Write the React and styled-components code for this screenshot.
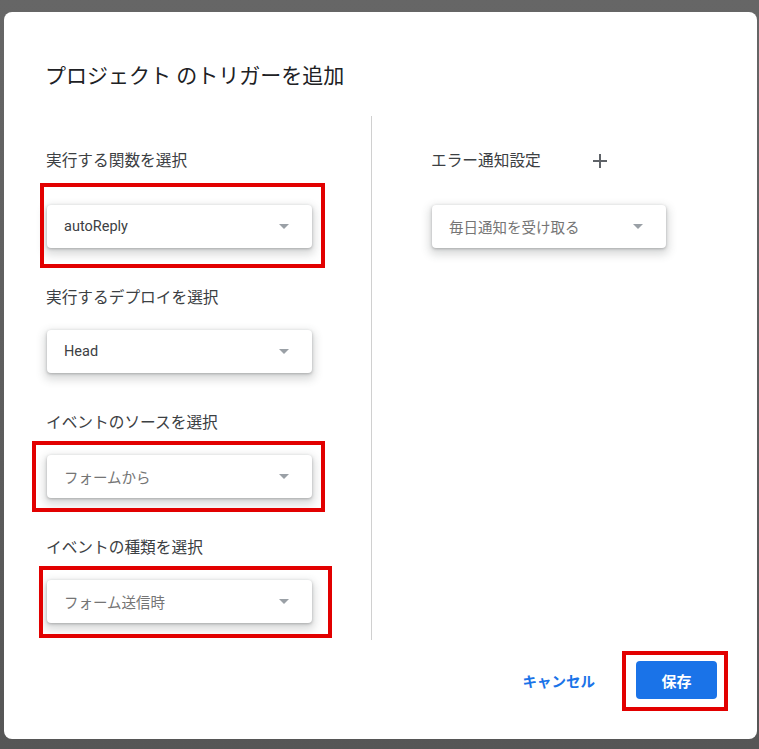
import React from "react";
import styled, { createGlobalStyle } from "styled-components";

const GlobalStyle = createGlobalStyle`
	* {
		box-sizing: border-box;
	}
	html, body {
		margin: 0;
		padding: 0;
	}
	body {
		background: linear-gradient(#666666, #565656);
		font-family: Roboto, "Noto Sans CJK JP", sans-serif;
		height: 749px;
		overflow: hidden;
	}
`;

function Caret() {
	return (
		<svg width="10" height="5" viewBox="0 0 10 5">
			<path d="M0 0h10L5 5z" fill="#9aa0a6" />
		</svg>
	);
}

function PlusIcon() {
	return (
		<svg width="14" height="14" viewBox="0 0 14 14">
			<path d="M7 0v14M0 7h14" stroke="#5f6368" strokeWidth="2" />
		</svg>
	);
}

function Dropdown({ value, muted, width, mark }) {
	return (
		<Field $width={width}>
			<Select>
				<SelectText $muted={muted}>{value}</SelectText>
				<Caret />
			</Select>
			{mark && <Mark {...mark} />}
		</Field>
	);
}

function App() {
	return (
		<>
			<GlobalStyle />
			<Dialog>
				<Title>プロジェクト のトリガーを追加</Title>
				<Body>
					<LeftColumn>
						<Group>
							<Label>実行する関数を選択</Label>
							<Spacer $h={34} />
							<Dropdown value="autoReply" mark={{ $top: -22, $left: -7, $right: -13, $bottom: -20 }} />
						</Group>
						<Group>
							<Label>実行するデプロイを選択</Label>
							<Spacer $h={22} />
							<Dropdown value="Head" />
						</Group>
						<Group>
							<Label>イベントのソースを選択</Label>
							<Spacer $h={22} />
							<Dropdown value="フォームから" muted mark={{ $top: -14, $left: -15, $right: -13, $bottom: -14 }} />
						</Group>
						<Group>
							<Label>イベントの種類を選択</Label>
							<Spacer $h={22} />
							<Dropdown value="フォーム送信時" muted mark={{ $top: -14, $left: -8, $right: -20, $bottom: -15 }} />
						</Group>
					</LeftColumn>
					<RightColumn>
						<LabelRow>
							<Label>エラー通知設定</Label>
							<AddButton>
								<PlusIcon />
							</AddButton>
						</LabelRow>
						<Spacer $h={34} />
						<Dropdown value="毎日通知を受け取る" muted width={234} />
					</RightColumn>
				</Body>
				<Footer>
					<CancelButton>キャンセル</CancelButton>
					<SaveWrap>
						<SaveButton>保存</SaveButton>
						<Mark $top={-10} $left={-14} $right={-11} $bottom={-12} />
					</SaveWrap>
				</Footer>
			</Dialog>
		</>
	);
}

export default App;

const Dialog = styled.div`
	margin: 12px 0 0 4px;
	width: 753px;
	height: 727px;
	background: #ffffff;
	border-radius: 8px;
	display: flex;
	flex-direction: column;
`;

const Title = styled.h1`
	margin: 0;
	padding: 50px 0 0 41px;
	font-size: 21px;
	line-height: 28px;
	font-weight: 400;
	color: #202124;
`;

const Body = styled.div`
	margin-top: 26px;
	height: 524px;
	display: grid;
	grid-template-columns: 368px 1fr;
`;

const LeftColumn = styled.div`
	border-right: 1px solid #d0d0d0;
	padding: 35px 0 0 42px;
	display: flex;
	flex-direction: column;
	gap: 40px;
`;

const RightColumn = styled.div`
	padding: 35px 0 0 59px;
	display: flex;
	flex-direction: column;
`;

const Group = styled.div`
	display: flex;
	flex-direction: column;
`;

const Spacer = styled.div`
	height: ${(p) => p.$h}px;
	flex-shrink: 0;
`;

const Label = styled.div`
	font-size: 15.7px;
	line-height: 20px;
	color: #3c4043;
	white-space: nowrap;
`;

const LabelRow = styled.div`
	display: flex;
	align-items: center;
	gap: 52px;
`;

const AddButton = styled.div`
	width: 14px;
	height: 14px;
	display: flex;
	align-items: center;
	justify-content: center;
`;

const Field = styled.div`
	position: relative;
	width: ${(p) => p.$width || 265}px;
	margin-left: 1px;
`;

const Select = styled.div`
	height: 43px;
	border-radius: 4px;
	background: #ffffff;
	box-shadow: 0 1px 3px 0 rgba(60, 64, 67, 0.35), 0 4px 8px 3px rgba(60, 64, 67, 0.18);
	display: flex;
	align-items: center;
	justify-content: space-between;
	padding: 0 23px 0 17px;
`;

const SelectText = styled.span`
	font-size: 14.5px;
	color: ${(p) => (p.$muted ? "#757575" : "#3c4043")};
`;

const Mark = styled.div`
	position: absolute;
	top: ${(p) => p.$top}px;
	left: ${(p) => p.$left}px;
	right: ${(p) => p.$right}px;
	bottom: ${(p) => p.$bottom}px;
	border: 4px solid #e20000;
	pointer-events: none;
`;

const Footer = styled.div`
	display: flex;
	justify-content: flex-end;
	align-items: center;
	padding: 21px 40px 0 0;
`;

const CancelButton = styled.button`
	background: none;
	border: none;
	padding: 0 8px;
	margin-right: 33px;
	font-family: Roboto, "Noto Sans CJK JP", sans-serif;
	font-size: 14.5px;
	font-weight: 700;
	color: #1a73e8;
	cursor: pointer;
`;

const SaveWrap = styled.div`
	position: relative;
`;

const SaveButton = styled.button`
	width: 81px;
	height: 38px;
	border: none;
	border-radius: 4px;
	background: #1a73e8;
	color: #ffffff;
	font-family: Roboto, "Noto Sans CJK JP", sans-serif;
	font-size: 15px;
	font-weight: 700;
	cursor: pointer;
	display: block;
`;
